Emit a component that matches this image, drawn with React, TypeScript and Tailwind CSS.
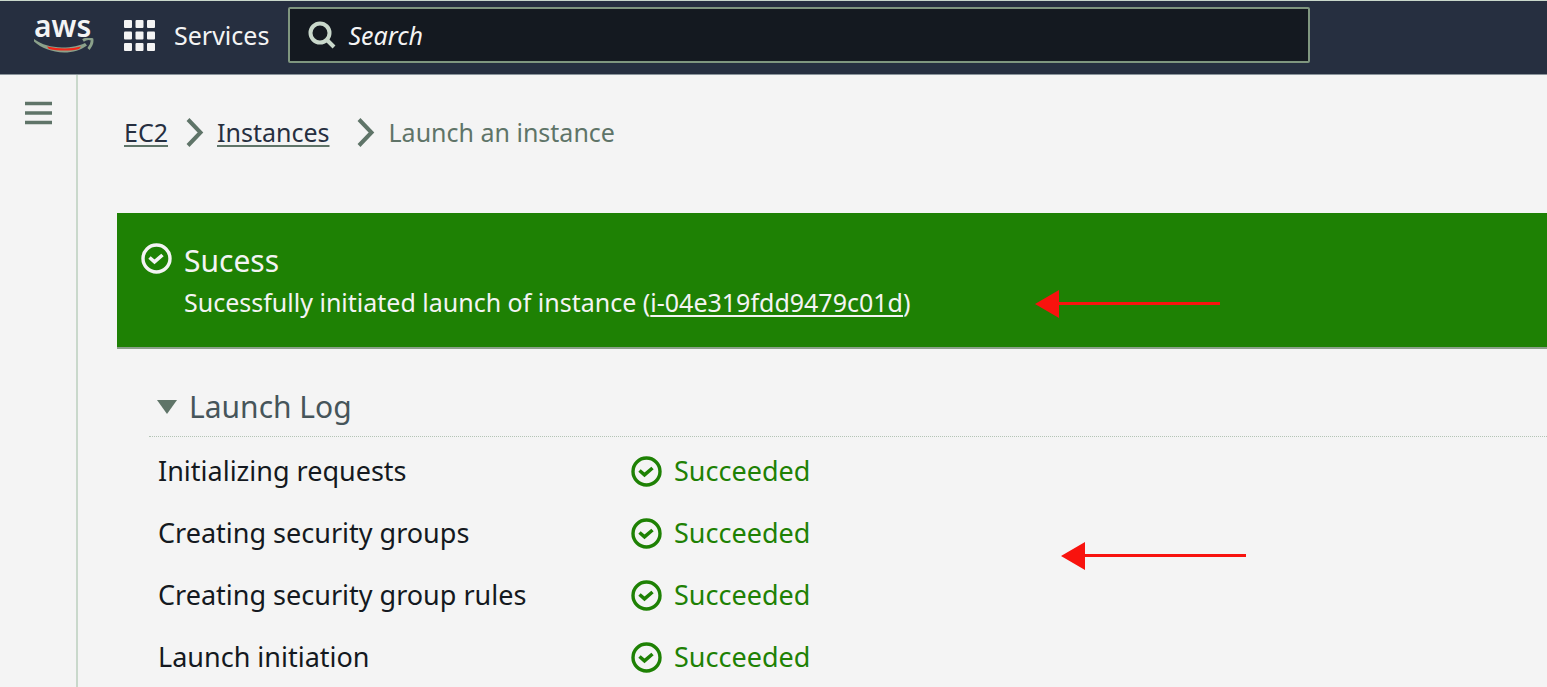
const steps = [
  "Initializing requests",
  "Creating security groups",
  "Creating security group rules",
  "Launch initiation",
];

function AwsLogo() {
  return (
    <a href="#home" aria-label="AWS home" className="flex w-[60px] flex-col pb-[3px]">
      <span className="h-6 text-[30px] leading-[24px] font-semibold text-[#f4f4f4]">
        aws
      </span>
      <svg viewBox="0 0 60 16" className="h-4 w-[60px]" fill="none" aria-hidden="true">
        <path d="M0 1C8 7 17 9 28 9.500C38 9.500 46 7.500 51 5L53 7.500C47 12 39 14.500 30 14.500C18 14 7 10 0 3.500Z" fill="#8ba18a" />
        <path d="M13 8.500C25 11 37 11 47 8.500L45 11C37 13 25 13 15 11Z" fill="#f0271b" />
        <path d="M49 2.500C52 .5 56 .5 58 1.500C58.500 4.500 57 8 54.500 11" stroke="#8ba18a" strokeWidth="2.800" />
      </svg>
    </a>
  );
}

function GridIcon() {
  return (
    <svg viewBox="0 0 31 31" className="size-[31px] shrink-0" fill="#f4f4f4" aria-hidden="true">
      {[0, 11.5, 23].map((y) =>
        [0, 11.5, 23].map((x) => <rect key={`${x}-${y}`} x={x} y={y} width="8" height="8" rx="1" />)
      )}
    </svg>
  );
}

function CheckCircle() {
  return (
    <svg viewBox="0 0 31 31" className="size-[31px] shrink-0" fill="none" stroke="currentColor" strokeWidth="3.400" aria-hidden="true">
      <circle cx="15.500" cy="15.500" r="13.500" />
      <path d="M8.500 14.500L13.500 18.800L21.500 12" strokeWidth="3.600" />
    </svg>
  );
}

function Chevron() {
  return (
    <svg viewBox="0 0 18 30" className="h-[30px] w-[18px] shrink-0" fill="none" stroke="#5f7468" strokeWidth="4" aria-hidden="true">
      <path d="M2 2.500L14.500 15.500L2 28.500" />
    </svg>
  );
}

function Arrow({ className }: { className: string }) {
  return (
    <svg viewBox="0 0 185 28" className={`absolute h-7 w-[185px] ${className}`} fill="#f8130e" aria-hidden="true">
      <path d="M0 14L24 0V12H185V15H24V28Z" />
    </svg>
  );
}

export default function App() {
  return (
    <div className="flex min-h-screen flex-col bg-[#f4f4f4] font-['Noto_Sans',sans-serif] text-[#141920]">
      <header className="flex h-[75px] items-center border-t border-b border-t-[#c9d8cb] border-b-[#8a949b] bg-[#262f40] pb-[5px] pl-[34px] text-[25px] text-[#f4f4f4]">
        <AwsLogo />
        <button type="button" className="ml-[30px] flex items-center gap-[19px] leading-[36px]">
          <GridIcon />
          Services
        </button>
        <label className="mr-[237px] ml-[19px] flex h-14 flex-1 items-center gap-3 rounded-xs border-2 border-[#7f967f] bg-[#141920] pl-[18px]">
          <svg viewBox="0 0 28 28" className="size-7 shrink-0" fill="none" stroke="#c9d8cb" aria-hidden="true">
            <circle cx="12" cy="12" r="9.500" strokeWidth="4" />
            <path d="M18.500 18.500L26 26" strokeWidth="4" />
          </svg>
          <input
            type="search"
            aria-label="Search"
            placeholder="Search"
            className="min-w-0 flex-1 bg-transparent text-[25px] leading-[36px] italic outline-none placeholder:text-[#f4f4f4]"
          />
        </label>
      </header>

      <div className="flex flex-1">
        <aside className="w-[78px] shrink-0 border-r-2 border-[#c9d8cb] pt-[26px] pl-[25px]">
          <button type="button" aria-label="Open navigation" className="block">
            <svg viewBox="0 0 27 24" className="h-6 w-[27px]" stroke="#5f7468" strokeWidth="3.500" aria-hidden="true">
              <path d="M0 2.500H27M0 12H27M0 21.500H27" />
            </svg>
          </button>
        </aside>

        <main className="min-w-0 flex-1 pl-[39px]">
          <nav aria-label="Breadcrumb" className="flex items-center pt-[39px] pl-[7px] text-[25px] leading-[36px] text-[#5f7468]">
            <a href="#ec2" className="text-[#262f40] underline decoration-[#5f7468] decoration-2 underline-offset-3">EC2</a>
            <span className="mr-[13px] ml-[18px]"><Chevron /></span>
            <a href="#instances" className="text-[#262f40] underline decoration-[#5f7468] decoration-2 underline-offset-3">Instances</a>
            <span className="mr-[14px] ml-[27px]"><Chevron /></span>
            <span aria-current="page">Launch an instance</span>
          </nav>

          <section className="relative mt-[63px] flex h-[136px] gap-3 border-b-2 border-[#8ba18a] bg-[#1e8104] pt-[30px] pl-6 text-[#f4f4f4]">
            <CheckCircle />
            <div>
              <h1 className="text-[30px] leading-[36px]">Sucess</h1>
              <p className="pt-[3px] text-[25px] leading-[40px]">
                Sucessfully initiated launch of instance (
                <a href="#instance" className="underline decoration-2 underline-offset-3">i-04e319fdd9479c01d</a>)
              </p>
            </div>
            <Arrow className="top-[77px] left-[918px]" />
          </section>

          <details open className="relative ml-8">
            <summary className="flex h-[88px] list-none items-center gap-3 border-b border-dotted border-[#b4c4b6] pt-7 pl-2 text-[30px] leading-[40px] text-[#46555a]">
              <svg viewBox="0 0 20 15" className="h-[15px] w-5" fill="#5f7468" aria-hidden="true">
                <path d="M0 1H20L10 15Z" />
              </svg>
              Launch Log
            </summary>
            <table className="ml-[9px] text-left text-[27px] leading-[38px]">
              <tbody>
                {steps.map((step, i) => (
                  <tr key={step}>
                    <th scope="row" className={`w-[473px] font-normal ${i ? "pt-6" : "pt-[15px]"}`}>{step}</th>
                    <td className={i ? "pt-6" : "pt-[15px]"}>
                      <span className="flex items-center gap-3 text-[#1e8104]">
                        <CheckCircle />
                        Succeeded
                      </span>
                    </td>
                  </tr>
                ))}
              </tbody>
            </table>
            <Arrow className="top-[193px] left-[912px]" />
          </details>
        </main>
      </div>
    </div>
  );
}
